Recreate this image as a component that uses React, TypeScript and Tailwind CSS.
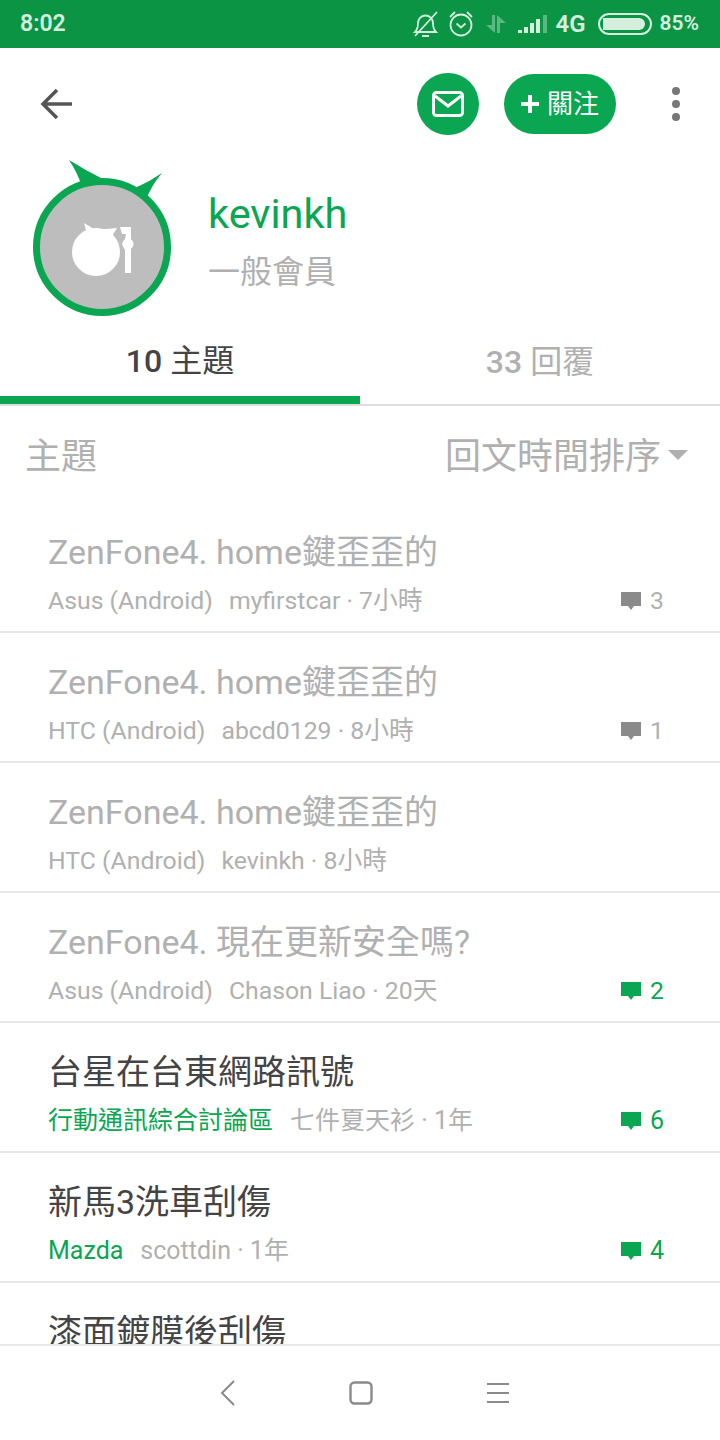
const topics = [
  { title: "ZenFone4. home鍵歪歪的", board: "Asus (Android)", meta: "myfirstcar · 7小時", count: "3", read: true, greenCount: false },
  { title: "ZenFone4. home鍵歪歪的", board: "HTC (Android)", meta: "abcd0129 · 8小時", count: "1", read: true, greenCount: false },
  { title: "ZenFone4. home鍵歪歪的", board: "HTC (Android)", meta: "kevinkh · 8小時", count: "", read: true, greenCount: false },
  { title: "ZenFone4. 現在更新安全嗎?", board: "Asus (Android)", meta: "Chason Liao · 20天", count: "2", read: true, greenCount: true },
  { title: "台星在台東網路訊號", board: "行動通訊綜合討論區", meta: "七件夏天衫 · 1年", count: "6", read: false, greenCount: true },
  { title: "新馬3洗車刮傷", board: "Mazda", meta: "scottdin · 1年", count: "4", read: false, greenCount: true },
];

const BubbleIcon = ({ green }: { green: boolean }) => (
  <svg width="22" height="20" viewBox="0 0 22 20" className={green ? "text-[#0aa651]" : "text-[#8a8a8a]"}>
    <path d="M1 1h20v14h-7l-3 4-3-4H1z" fill="currentColor" />
  </svg>
);

const StatusBar = () => (
  <div className="h-12 shrink-0 bg-[#0a9444] flex items-center justify-between pl-5 pr-[21px] text-[#d5efdf] font-medium">
    <span className="text-[23px] font-semibold">8:02</span>
    <div className="flex items-center">
      <svg width="26" height="28" viewBox="0 0 26 28" fill="none" stroke="currentColor" strokeWidth="1.800" className="mr-[9px]">
        <path d="M2 22c2-2 3-3.500 3-9 0-4.500 3.500-7.500 7.500-7.500s7.500 3 7.500 7.500c0 5.500 1 7 3 9z" />
        <path d="M9 26h7M2 26 24 2" />
      </svg>
      <svg width="26" height="28" viewBox="0 0 26 28" fill="none" stroke="currentColor" strokeWidth="1.800" className="mr-[10px]">
        <circle cx="13" cy="15" r="10.500" />
        <path d="m8.500 13.500 4.500 4 4.500-4M2 7l5-5M24 7l-5-5" />
      </svg>
      <svg width="24" height="18" viewBox="0 0 22 18" fill="currentColor" opacity="0.4" className="mr-[10px]">
        <path d="M7 0h3v18L1 10h6zM12 18V0l9 8h-6v10z" />
      </svg>
      <svg width="30" height="20" viewBox="0 0 30 20" className="mr-[7px]">
        <path d="M0 16h4v3H0zM6 13h4v6H6zM12 9h4v10h-4zM18 5h4v14h-4z" fill="currentColor" />
        <path d="M25 1h4v18h-4z" fill="currentColor" opacity="0.4" />
      </svg>
      <span className="text-[24px] font-semibold mr-[12px]">4G</span>
      <div className="w-[54px] h-[22px] rounded-full border-2 border-[#d5efdf] p-[3px] mr-[8px]">
        <div className="h-full w-[42px] rounded-l-[6px] rounded-r-full bg-[#d5efdf]" />
      </div>
      <span className="text-[21px] font-semibold">85%</span>
    </div>
  </div>
);

const Header = () => (
  <div className="h-28 shrink-0 flex items-center pl-10">
    <svg width="32" height="32" viewBox="0 0 32 32" fill="none" stroke="#555555" strokeWidth="3.500">
      <path d="M32 16H3M17 2 3 16l14 14" />
    </svg>
    <div className="ml-auto flex items-center">
      <div className="w-[62px] h-[62px] rounded-full bg-[#0aa651] flex items-center justify-center">
        <svg width="32" height="26" viewBox="0 0 32 26" fill="none" stroke="#ffffff" strokeWidth="3">
          <rect x="1.500" y="1.500" width="29" height="23" rx="3" />
          <path d="m3 5 13 10L29 5" />
        </svg>
      </div>
      <div className="ml-[25px] w-28 h-[60px] rounded-full bg-[#0aa651] flex items-center justify-center text-white text-[26px]">
        <svg width="18" height="18" viewBox="0 0 18 18" className="mr-[8px]">
          <path d="M7 0h4v7h7v4h-7v7H7v-7H0V7h7z" fill="#ffffff" />
        </svg>
        關注
      </div>
      <div className="w-[104px] pl-4 flex flex-col items-center gap-[5px]">
        <span className="w-2 h-2 rounded-full bg-[#777777]" />
        <span className="w-2 h-2 rounded-full bg-[#777777]" />
        <span className="w-2 h-2 rounded-full bg-[#777777]" />
      </div>
    </div>
  </div>
);

const Profile = () => (
  <div className="h-[156px] shrink-0 flex pl-[33px]">
    <svg width="138" height="156" viewBox="0 0 138 156">
      <path d="M36 0Q52 10 68 18L48 24Q44 12 36 0zM129 13Q118 26 113 40L102 28Q116 22 129 13z" fill="#0aa651" />
      <circle cx="69" cy="87" r="65.500" fill="#bdbdbd" stroke="#0aa651" strokeWidth="7" />
      <circle cx="63" cy="92" r="24" fill="#ffffff" />
      <path d="m51 63 10 6 12 0 11-1-6 10-24-4z" fill="#ffffff" />
      <path d="M87 67h11v46h-6V90l-3-6 3-5 1-5h-4z" fill="#ffffff" />
      <circle cx="95" cy="84" r="5.500" fill="#ffffff" />
    </svg>
    <div className="ml-[37px] pt-[28px]">
      <div className="text-[41.500px] leading-[52px] text-[#0aa651]">kevinkh</div>
      <div className="text-[32px] leading-[44px] mt-[10px] text-[#b0b0b0]">一般會員</div>
    </div>
  </div>
);

const Tabs = () => (
  <div className="h-[90px] shrink-0 flex border-b-2 border-[#dedede]">
    <div className="w-1/2 border-b-8 border-[#0aa651] h-[88px] flex items-center justify-center pt-[10px] text-[32px] text-[#444444]">
      <span className="font-medium mr-2">10</span>主題
    </div>
    <div className="w-1/2 h-[88px] flex items-center justify-center pt-1 text-[32px] text-[#b0b0b0]">
      <span className="font-medium mr-2">33</span>回覆
    </div>
  </div>
);

const SortRow = () => (
  <div className="h-[97px] shrink-0 flex items-center justify-between pl-[25px] pr-[32px] pt-1 text-[36px] text-[#b0b0b0]">
    <span>主題</span>
    <div className="flex items-center">
      <span>回文時間排序</span>
      <span className="ml-[7px] -mt-1 w-0 h-0 border-x-[10px] border-x-transparent border-t-[10px] border-t-[#b0b0b0]" />
    </div>
  </div>
);

const TopicRow = ({ topic }: { topic: (typeof topics)[number] }) => (
  <div className="h-[130px] shrink-0 border-b-2 border-[#e8e8e8] px-12 pt-[25px]">
    <div className={"text-[34px] leading-[48px] " + (topic.read ? "text-[#b0b0b0]" : "text-[#444444]")}>{topic.title}</div>
    <div className={"mt-[3px] h-[44px] flex items-center text-[#b0b0b0] " + (topic.read ? "text-[24.800px]" : "text-[25px]")}>
      <span className={topic.read ? "" : "text-[#0aa651]"}>{topic.board}</span>
      <span className={topic.read ? "ml-4" : "ml-[17px]"}>{topic.meta}</span>
      {topic.count && (
        <span className={"ml-auto mr-2 flex items-center " + (topic.greenCount ? "text-[#0aa651]" : "text-[#b0b0b0]")}>
          <BubbleIcon green={topic.greenCount} />
          <span className="ml-[8px]">{topic.count}</span>
        </span>
      )}
    </div>
  </div>
);

const NavBar = () => (
  <div className="h-24 shrink-0 border-t-2 border-[#e8e8e8] flex items-center justify-center text-[#8a8a8a] bg-white -mt-[2px] relative">
    <svg width="16" height="26" viewBox="0 0 16 26" fill="none" stroke="currentColor" strokeWidth="2" className="ml-[10px]">
      <path d="M14 1 2 13l12 12" />
    </svg>
    <svg width="24" height="24" viewBox="0 0 24 24" fill="none" stroke="currentColor" strokeWidth="2.400" className="ml-[113px]">
      <rect x="1.500" y="1.500" width="21" height="21" rx="4" />
    </svg>
    <svg width="24" height="22" viewBox="0 0 24 22" fill="none" stroke="currentColor" strokeWidth="2" className="ml-[113px]">
      <path d="M1 2h22M1 11h22M1 20h22" />
    </svg>
  </div>
);

export default function App() {
  return (
    <div className="w-[720px] h-[1440px] flex flex-col bg-white overflow-hidden font-['Roboto','Noto_Sans_CJK_TC',sans-serif]">
      <StatusBar />
      <Header />
      <Profile />
      <Tabs />
      <SortRow />
      <div className="flex-1 min-h-0 overflow-hidden">
        {topics.map((topic, i) => (
          <TopicRow key={i} topic={topic} />
        ))}
        <div className="px-12 pt-[25px] text-[34px] leading-[48px] text-[#444444]">漆面鍍膜後刮傷</div>
      </div>
      <NavBar />
    </div>
  );
}
